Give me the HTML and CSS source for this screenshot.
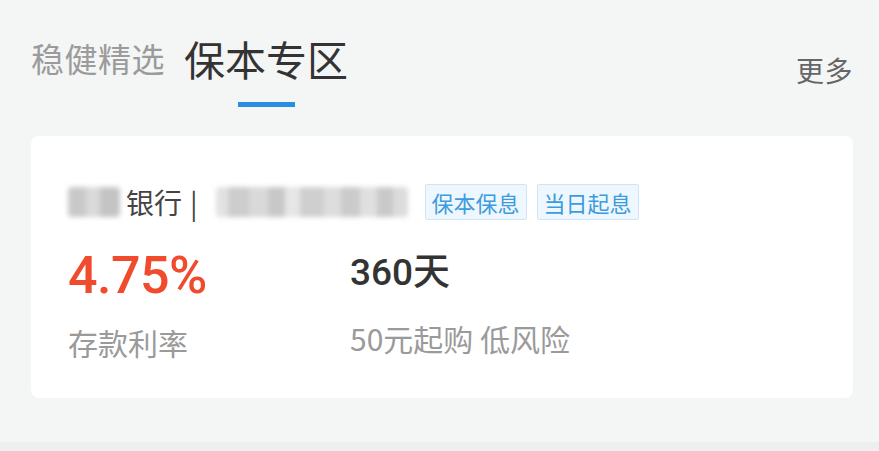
FILE: index.html
```html
<!DOCTYPE html>
<html lang="zh-CN">
<head>
<meta charset="utf-8">
<title>保本专区</title>
<link rel="stylesheet" href="styles.css">
</head>
<body>
<div class="page">
  <header class="header">
    <nav class="tabs">
      <div class="tab">稳健精选</div>
      <div class="tab tab-active">
        <span class="tab-label">保本专区</span>
        <span class="tab-bar"></span>
      </div>
    </nav>
    <a class="more">更多</a>
  </header>

  <section class="card">
    <div class="card-top">
      <span class="mosaic mosaic-bank"></span>
      <span class="bank">银行</span>
      <span class="sep">|</span>
      <span class="mosaic mosaic-name"></span>
      <span class="tag">保本保息</span>
      <span class="tag">当日起息</span>
    </div>
    <div class="card-stats">
      <div class="stat stat-rate">
        <div class="rate">4.75%</div>
        <div class="label">存款利率</div>
      </div>
      <div class="stat stat-term">
        <div class="term">360天</div>
        <div class="label">50元起购 低风险</div>
      </div>
    </div>
  </section>
  <div class="footer-strip"></div>
</div>
</body>
</html>
```

FILE: styles.css
```css
* { box-sizing: border-box; }

html, body {
  margin: 0;
  padding: 0;
  background: #f4f5f5;
}

body {
  font-family: "Noto Sans CJK SC", "Noto Sans", sans-serif;
  width: 879px;
  height: 451px;
  overflow: hidden;
}

.page {
  display: flex;
  flex-direction: column;
  height: 451px;
  padding: 0 26px 0 31px;
}

.header {
  display: flex;
  justify-content: space-between;
  align-items: flex-start;
  height: 107px;
}

.tabs {
  display: flex;
  align-items: flex-start;
  gap: 19px;
  padding-top: 38px;
}

.tab {
  font-size: 33px;
  line-height: 40px;
  height: 40px;
  color: #9b9b9b;
  letter-spacing: 0.5px;
}

.tab-active {
  display: flex;
  flex-direction: column;
  align-items: center;
  height: auto;
  color: #333;
}

.tab-label {
  font-size: 41px;
  line-height: 40px;
  letter-spacing: 0;
}

.tab-bar {
  display: block;
  width: 57px;
  height: 5px;
  margin-top: 24px;
  background: #2b8de0;
}

.more {
  font-size: 28px;
  line-height: 28px;
  color: #666;
  padding-top: 56px;
  letter-spacing: 0.5px;
}

.card {
  margin-top: 29px;
  background: #fff;
  border-radius: 8px;
  padding: 48px 37px 41px 37px;
  display: flex;
  flex-direction: column;
}

.card-top {
  display: flex;
  align-items: center;
  height: 36px;
}

.mosaic {
  display: block;
  height: 30px;
  filter: blur(2.5px);
  border-radius: 4px;
}

.mosaic-bank {
  width: 52px;
  background:
    linear-gradient(90deg, #c9c9c9 0 35%, #dadada 35% 62%, #c4c4c4 62% 100%);
}

.mosaic-name {
  width: 192px;
  margin-left: 18px;
  background:
    linear-gradient(90deg,
      #e2e2e2 0 6%, #cdcdcd 6% 17%, #d9d9d9 17% 27%, #c8c8c8 27% 36%,
      #e6e6e6 36% 44%, #cfcfcf 44% 56%, #dddddd 56% 65%, #cbcbcb 65% 75%,
      #e0e0e0 75% 84%, #c9c9c9 84% 92%, #dcdcdc 92% 100%);
}

.bank {
  margin-left: 6px;
  font-size: 28px;
  line-height: 36px;
  color: #444;
  white-space: nowrap;
}

.sep {
  margin-left: 8px;
  font-size: 28px;
  line-height: 36px;
  color: #444;
}

.tag {
  display: inline-flex;
  align-items: center;
  height: 36px;
  padding: 0 6px;
  margin-left: 17px;
  font-size: 22px;
  line-height: 22px;
  color: #3d9ce0;
  background: #eef7fd;
  border: 1px solid #cfe5f6;
  border-radius: 2px;
  white-space: nowrap;
}

.tag + .tag {
  margin-left: 10px;
}

.card-stats {
  display: flex;
  align-items: flex-start;
  margin-top: 30px;
}

.stat {
  display: flex;
  flex-direction: column;
}

.stat-rate {
  width: 282px;
}

.rate {
  font-family: Roboto, "Noto Sans CJK SC", sans-serif;
  font-size: 52px;
  line-height: 52px;
  font-weight: 500;
  color: #f04b2d;
  letter-spacing: -0.5px;
}

.term {
  font-family: Roboto, "Noto Sans CJK SC", sans-serif;
  font-size: 37px;
  line-height: 37px;
  font-weight: 500;
  color: #333;
  margin-top: 4px;
}

.stat-rate .label { margin-top: 26px; }
.stat-term .label { margin-top: 33px; }

.label {
  font-size: 30px;
  line-height: 29px;
  color: #9a9a9a;
  white-space: nowrap;
}

.footer-strip {
  margin: auto -26px 0 -31px;
  height: 9px;
  background: #eeeeee;
}
```
